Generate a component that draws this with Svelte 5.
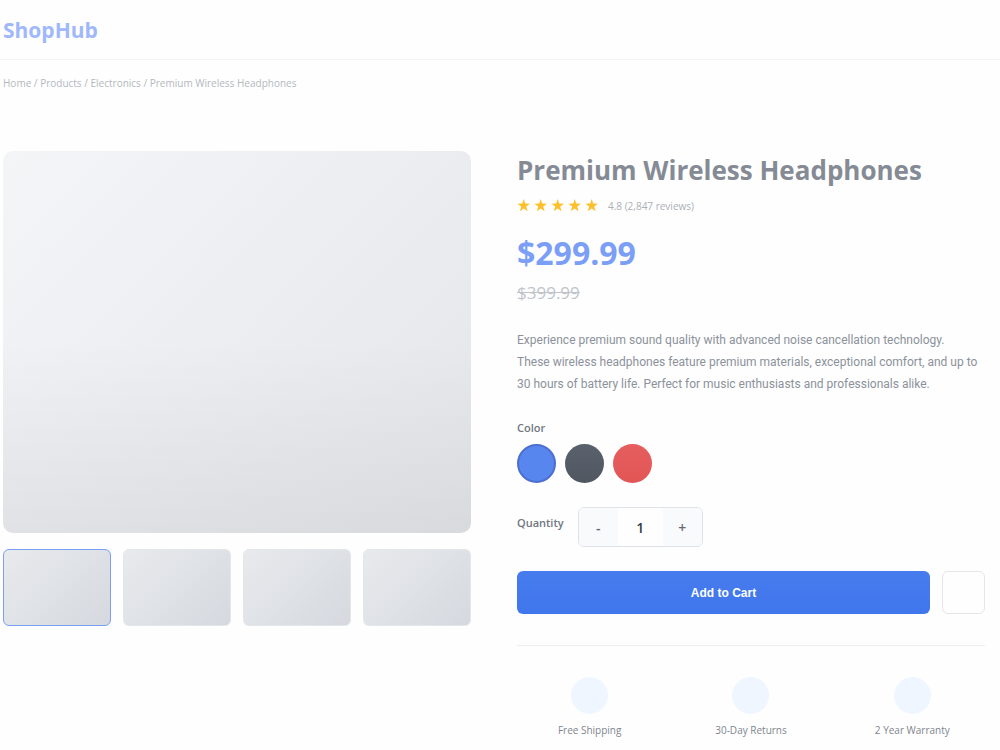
<script>
  const crumbs = ['Home', 'Products', 'Electronics'];
  const colors = [
    { name: 'Blue', tone: 'blue' },
    { name: 'Graphite', tone: 'dark' },
    { name: 'Red', tone: 'red' }
  ];
  const features = ['Free Shipping', '30-Day Returns', '2 Year Warranty'];
  let thumb = $state(0);
  let color = $state('blue');
  let quantity = $state(1);
</script>

<header>
  <a class="logo" href="#home">ShopHub</a>
</header>

<nav class="crumbs" aria-label="Breadcrumb">
  {#each crumbs as crumb}<a href="#{crumb.toLowerCase()}">{crumb}</a>{' / '}{/each}<span>Premium Wireless Headphones</span>
</nav>

<main>
  <section class="gallery" aria-label="Product images">
    <div class="photo"></div>
    <div class="thumbs">
      {#each [0, 1, 2, 3] as i}
        <button class="thumb" class:active={thumb === i} aria-label="Image {i + 1}" onclick={() => (thumb = i)}></button>
      {/each}
    </div>
  </section>

  <section class="info">
    <h1>Premium Wireless Headphones</h1>
    <div class="rating">
      <div class="stars" aria-hidden="true">
        {#each [0, 1, 2, 3, 4] as _}
          <svg viewBox="0 0 14 14" width="14" height="14"><path d="M6.7 0 8.2 4.6 13 4.7 9.2 7.6 10.6 12.3 6.7 9.5 2.8 12.3 4.2 7.6 .4 4.7 5.2 4.6Z" /></svg>
        {/each}
      </div>
      <span>4.8 (2,847 reviews)</span>
    </div>
    <div class="price">$299.99</div>
    <s class="was">$399.99</s>
    <p class="description">
      Experience premium sound quality with advanced noise cancellation technology.<br />
      These wireless headphones feature premium materials, exceptional comfort, and up to<br />
      30 hours of battery life. Perfect for music enthusiasts and professionals alike.
    </p>

    <h2>Color</h2>
    <div class="swatches">
      {#each colors as c}
        <button class="swatch {c.tone}" class:chosen={color === c.tone} aria-label={c.name} onclick={() => (color = c.tone)}></button>
      {/each}
    </div>

    <div class="quantity">
      <label for="qty">Quantity</label>
      <div class="stepper">
        <button aria-label="Decrease quantity" onclick={() => (quantity = Math.max(1, quantity - 1))}>-</button>
        <input id="qty" type="text" inputmode="numeric" bind:value={quantity} />
        <button aria-label="Increase quantity" onclick={() => (quantity = Number(quantity) + 1)}>+</button>
      </div>
    </div>

    <div class="actions">
      <button class="cart">Add to Cart</button>
      <button class="wish" aria-label="Add to wishlist"></button>
    </div>

    <ul class="features">
      {#each features as feature}
        <li><span class="dot"></span>{feature}</li>
      {/each}
    </ul>
  </section>
</main>

<style>
  :global(body) {
    margin: 0;
    background: #fefefe;
    font-family: 'Open Sans', 'Noto Sans', sans-serif;
    color: #868c96;
  }
  header, nav, main, section, div, button, input, ul, li, h1 { box-sizing: border-box; }
  button, input { font: inherit; margin: 0; padding: 0; }
  button { cursor: pointer; }
  a { color: inherit; text-decoration: none; }

  header {
    display: flex;
    align-items: center;
    height: 60px;
    padding: 0 3px;
    border-bottom: 1px solid #f3f4f5;
  }
  .logo { font-size: 21px; line-height: 28px; font-weight: 700; color: #9fb8fb; }
  .crumbs { padding: 14px 3px; font-size: 10px; line-height: 18px; color: #b4b8be; }

  main {
    display: grid;
    grid-template-columns: 1fr 1fr;
    gap: 46px;
    padding: 45px 15px 0 3px;
  }
  .photo {
    height: 382px;
    border-radius: 10px;
    background:
      linear-gradient(180deg, transparent 50%, rgba(0, 0, 0, 0.05)),
      linear-gradient(135deg, #f4f5f7, #e4e5e9);
  }
  .thumbs { display: grid; grid-template-columns: repeat(4, 1fr); gap: 12px; margin-top: 16px; }
  .thumb {
    height: 77px;
    border: 1px solid #e4e7ea;
    border-radius: 6px;
    background: linear-gradient(135deg, #e8eaed, #d5d9df) border-box;
  }
  .thumb.active { border-color: #7b9ff5; }

  h1 { margin: 0; font-size: 26px; line-height: 38px; font-weight: 700; color: #858b95; }
  .rating { display: flex; align-items: center; gap: 9px; margin-top: 8px; font-size: 10px; line-height: 18px; color: #abb0b7; }
  .stars { display: flex; gap: 3px; }
  .stars svg { fill: #fcc02b; }
  .price { margin-top: 17px; font-size: 32px; line-height: 42px; font-weight: 700; color: #7b9ff6; }
  .was { display: block; margin-top: 5px; font-size: 17px; line-height: 28px; color: #bfc4cb; }
  .description { margin: 22px 0 0; font-family: Roboto, 'Open Sans', sans-serif; font-size: 12px; line-height: 22px; color: #8c929b; }
  h2, label { margin: 0; font-size: 11px; line-height: 16px; font-weight: 600; color: #707780; }
  h2 { margin-top: 25px; }
  .swatches { display: flex; gap: 9px; margin-top: 8px; }
  .swatch { width: 39px; height: 39px; border: 2px solid transparent; border-radius: 50%; }
  .blue { background: #5886ef border-box; }
  .dark { background: linear-gradient(#59616c, #505761) border-box; }
  .red { background: linear-gradient(#e65e5f, #e25555) border-box; }
  .blue.chosen { border-color: #4c6fd0; }

  .quantity { display: flex; align-items: flex-start; gap: 14px; margin-top: 24px; }
  .quantity label { margin-top: 8px; }
  .stepper { display: flex; height: 40px; border: 1px solid #dfe2e7; border-radius: 6px; overflow: hidden; }
  .stepper button { width: 39px; border: 0; background: #f9fafc; color: #636a74; font-size: 14px; font-weight: 600; }
  .stepper input { width: 45px; border: 0; background: #fefefe; color: #343b46; font-size: 14px; font-weight: 600; text-align: center; }

  .actions { display: flex; gap: 12px; margin-top: 24px; }
  .cart {
    flex: 1;
    height: 43px;
    border: 0;
    border-radius: 6px;
    background: linear-gradient(#477cee, #4076ec);
    color: #fff;
    font-family: 'Liberation Sans', Arial, sans-serif;
    font-size: 12px;
    font-weight: 700;
  }
  .wish { width: 43px; height: 43px; border: 1px solid #e4e6e9; border-radius: 6px; background: #fefefe; }

  .features {
    display: grid;
    grid-template-columns: repeat(3, 1fr);
    gap: 16px;
    margin: 31px 0 0;
    padding: 31px 0 0;
    border-top: 1px solid #edeeef;
    list-style: none;
    font-size: 10px;
    line-height: 16px;
    color: #7f858e;
  }
  .features li { display: flex; flex-direction: column; align-items: center; gap: 8px; }
  .dot { width: 37px; height: 37px; border-radius: 50%; background: #eff6ff; }
</style>
